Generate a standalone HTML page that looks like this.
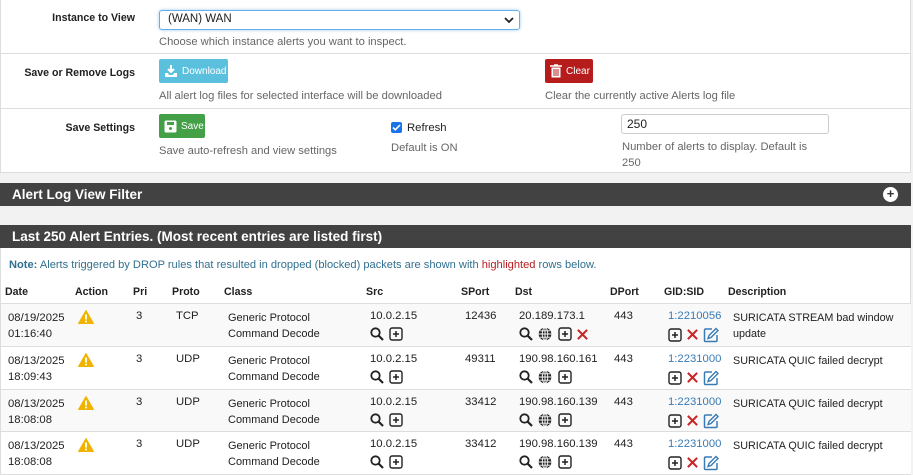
<!DOCTYPE html>
<html><head><style>
*{margin:0;padding:0;box-sizing:border-box}
body{width:913px;height:475px;background:#f2f2f2;font-family:"Liberation Sans",sans-serif;font-size:11.3px;color:#212121;position:relative;overflow:hidden}
.a{position:absolute;white-space:nowrap}
.lbl{font-weight:bold;text-align:right;width:135px;left:0;font-size:10.6px}
.help{color:#666;font-size:11.2px}
.btn{position:absolute;color:#fff;font-size:10px;border-radius:2px;display:flex;align-items:center;gap:4px;padding-left:5px}
.bar{position:absolute;left:0;width:911px;background:#424242;color:#fff;font-weight:bold;font-size:13.5px;padding-left:12px}
.th{font-weight:bold;top:286px;font-size:10.6px}
.row{position:absolute;left:1px;width:910px;border-bottom:1px solid #ddd}
svg{display:inline-block;vertical-align:middle}
.ic{position:absolute}
.blue{color:#3a7ab5}
.num{font-size:12px}
</style></head><body>
<div style="position:absolute;left:0;top:0;width:911px;height:173px;background:#fff;border-left:1px solid #ddd;border-right:1px solid #ddd;border-bottom:1px solid #ddd"></div>
<div style="position:absolute;left:1px;top:53px;width:910px;border-top:1px solid #ddd"></div>
<div style="position:absolute;left:1px;top:108px;width:910px;border-top:1px solid #ddd"></div>

<div class="a lbl" style="top:12px">Instance to View</div>
<div class="a" style="left:159px;top:10px;width:361px;height:20px;border:1px solid #66afe9;border-radius:3px;box-shadow:0 0 3px #9cc7ee;padding:2px 8px;font-size:11.5px">(WAN) WAN
<svg style="position:absolute;right:5px;top:5px" width="10" height="8" viewBox="0 0 10 8"><path d="M1 2l4 4 4-4" stroke="#222" stroke-width="1.8" fill="none"/></svg></div>
<div class="a help" style="left:159px;top:36px">Choose which instance alerts you want to inspect.</div>

<div class="a lbl" style="top:67px">Save or Remove Logs</div>
<div class="btn" style="left:159px;top:59px;width:69px;height:24px;background:#5bc0de"><svg width="14" height="14" viewBox="0 0 14 14"><path d="M7 1v7M4 5l3 3 3-3" stroke="#fff" stroke-width="2" fill="none"/><path d="M1 9h3l1 2h4l1-2h3v4H1z" fill="#fff"/></svg>Download</div>
<div class="a help" style="left:159px;top:90px">All alert log files for selected interface will be downloaded</div>
<div class="btn" style="left:545px;top:59px;width:48px;height:24px;background:#b71c1c"><svg width="12" height="14" viewBox="0 0 12 14"><path d="M0 2h12M4 1h4" stroke="#fff" stroke-width="1.5"/><path d="M1.5 3.5h9v10h-9z" fill="#fff"/><path d="M4 5v7M6 5v7M8 5v7" stroke="#b71c1c" stroke-width="1"/></svg>Clear</div>
<div class="a help" style="left:545px;top:90px">Clear the currently active Alerts log file</div>

<div class="a lbl" style="top:122px">Save Settings</div>
<div class="btn" style="left:159px;top:114px;width:46px;height:24px;background:#43a047"><svg width="13" height="13" viewBox="0 0 13 13"><rect x="0.5" y="0.5" width="12" height="12" rx="1.5" fill="#fff"/><rect x="3" y="2" width="7" height="3" fill="#43a047"/><circle cx="6.5" cy="8.5" r="1.5" fill="#43a047"/></svg>Save</div>
<div class="a help" style="left:159px;top:145px">Save auto-refresh and view settings</div>
<div class="a" style="left:391px;top:122px;width:11px;height:11px;background:#1a73e8;border-radius:2px"><svg width="11" height="11" viewBox="0 0 11 11" style="position:absolute;top:0;left:0"><path d="M2 5.5l2.3 2.3L9 3" stroke="#fff" stroke-width="1.6" fill="none"/></svg></div>
<div class="a" style="left:407px;top:122px">Refresh</div>
<div class="a help" style="left:391px;top:142px">Default is ON</div>
<div class="a" style="left:621px;top:114px;width:208px;height:20px;border:1px solid #ccc;border-radius:3px;padding:2px 5px;font-size:12px">250</div>
<div class="a help" style="left:622px;top:139px;line-height:16px">Number of alerts to display. Default is<br>250</div>

<div class="bar" style="top:183px;height:23px;line-height:23px">Alert Log View Filter</div>
<div class="a" style="left:883px;top:187px;width:15px;height:15px;border-radius:50%;background:#fff;color:#333;font-size:13px;line-height:14px;text-align:center;font-weight:bold">+</div>
<div class="bar" style="top:225px;height:23px;line-height:23px">Last 250 Alert Entries. (Most recent entries are listed first)</div>
<div style="position:absolute;left:0;top:248px;width:911px;height:227px;background:#fff;border-left:1px solid #ddd;border-right:1px solid #ddd"></div>
<div class="a" style="left:9px;top:259px;font-size:11.1px;color:#31708f"><b>Note:</b> Alerts triggered by DROP rules that resulted in dropped (blocked) packets are shown with <span style="color:#b71c1c">highlighted</span> rows below.</div>

<div class="a th" style="left:5px">Date</div>
<div class="a th" style="left:75px">Action</div>
<div class="a th" style="left:133px">Pri</div>
<div class="a th" style="left:172px">Proto</div>
<div class="a th" style="left:224px">Class</div>
<div class="a th" style="left:366px">Src</div>
<div class="a th" style="left:461px">SPort</div>
<div class="a th" style="left:515px">Dst</div>
<div class="a th" style="left:610px">DPort</div>
<div class="a th" style="left:664px">GID:SID</div>
<div class="a th" style="left:728px">Description</div>
<div style="position:absolute;left:1px;top:303px;width:910px;border-top:1px solid #ddd"></div>

<svg width="0" height="0" style="position:absolute"><defs>
<symbol id="mag" viewBox="0 0 14 14"><circle cx="5.5" cy="5.5" r="4.2" stroke="#222" stroke-width="1.8" fill="none"/><path d="M8.5 8.5l4.5 4.5" stroke="#222" stroke-width="2.2"/></symbol>
<symbol id="plus" viewBox="0 0 14 14"><rect x="1" y="1" width="12" height="12" rx="2" stroke="#222" stroke-width="1.4" fill="none"/><path d="M7 4v6M4 7h6" stroke="#222" stroke-width="1.5"/></symbol>
<symbol id="globe" viewBox="0 0 14 14"><circle cx="7" cy="7" r="6.3" fill="#222"/><path d="M7 0.7v12.6M0.7 7h12.6M2 3.8h10M2 10.2h10" stroke="#fff" stroke-width="0.9"/><ellipse cx="7" cy="7" rx="2.8" ry="6.3" stroke="#fff" stroke-width="0.9" fill="none"/></symbol>
<symbol id="x" viewBox="0 0 14 14"><path d="M2 2l10 10M12 2L2 12" stroke="#c62828" stroke-width="2.2"/></symbol>
<symbol id="edit" viewBox="0 0 16 16"><path d="M9 2H2.5a1 1 0 0 0-1 1v10.5a1 1 0 0 0 1 1H13a1 1 0 0 0 1-1V8" stroke="#3a7ab5" stroke-width="1.5" fill="none"/><path d="M13 1.5l2 2-7 7-3 1 1-3z" stroke="#3a7ab5" stroke-width="1.4" fill="none"/></symbol>
<symbol id="warn" viewBox="0 0 16 14"><path d="M8 0.5L15.5 13.5H0.5z" fill="#f0b400" stroke="#f0b400" stroke-linejoin="round"/><path d="M8 4.5v5" stroke="#fff" stroke-width="1.8"/><circle cx="8" cy="11.5" r="1" fill="#fff"/></symbol>
</defs></svg>

<div class="row" style="top:304px;height:43px;background:#f9f9f9"></div>
<div class="row" style="top:347px;height:43px;background:#fff"></div>
<div class="row" style="top:390px;height:42px;background:#f9f9f9"></div>
<div class="row" style="top:432px;height:43px;background:#fff"></div>

<div id="rows"></div>
<script>
var R=[[304,"08/19/2025","01:16:40","TCP","12436","20.189.173.1","1:2210056","SURICATA STREAM bad window","update",true],
[347,"08/13/2025","18:09:43","UDP","49311","190.98.160.161","1:2231000","SURICATA QUIC failed decrypt","",false],
[390,"08/13/2025","18:08:08","UDP","33412","190.98.160.139","1:2231000","SURICATA QUIC failed decrypt","",false],
[432,"08/13/2025","18:08:08","UDP","33412","190.98.160.139","1:2231000","SURICATA QUIC failed decrypt","",false]];
var h="";
function ic(id,x,y,w,hh){return '<svg class="ic" style="left:'+x+'px;top:'+y+'px" width="'+w+'" height="'+(hh||w)+'"><use href="#'+id+'"/></svg>';}
R.forEach(function(r){var t=r[0]+6,iy=t+17;
h+='<div class="a" style="left:8px;top:'+t+'px;line-height:16px">'+r[1]+'<br>'+r[2]+'</div>';
h+=ic('warn',78,t,16,14);
h+='<div class="a" style="left:136px;top:'+t+'px">3</div>';
h+='<div class="a" style="left:176px;top:'+t+'px">'+r[3]+'</div>';
h+='<div class="a" style="left:228px;top:'+t+'px;line-height:16px;font-size:11px">Generic Protocol<br>Command Decode</div>';
h+='<div class="a" style="left:370px;top:'+t+'px">10.0.2.15</div>';
h+=ic('mag',370,iy,14)+ic('plus',389,iy,14);
h+='<div class="a" style="left:465px;top:'+t+'px">'+r[4]+'</div>';
h+='<div class="a" style="left:519px;top:'+t+'px">'+r[5]+'</div>';
h+=ic('mag',519,iy,14)+ic('globe',538,iy,14)+ic('plus',558,iy,14);
if(r[9])h+=ic('x',576,iy+1,13);
h+='<div class="a" style="left:614px;top:'+t+'px">443</div>';
h+='<div class="a blue" style="left:668px;top:'+t+'px">'+r[6]+'</div>';
h+=ic('plus',668,iy+1,14)+ic('x',686,iy+1,13)+ic('edit',703,iy,16);
h+='<div class="a" style="left:733px;top:'+t+'px;line-height:16px;font-size:10.8px">'+r[7]+(r[8]?'<br>'+r[8]:'')+'</div>';
});
document.getElementById('rows').innerHTML=h;
</script>
</body></html>
